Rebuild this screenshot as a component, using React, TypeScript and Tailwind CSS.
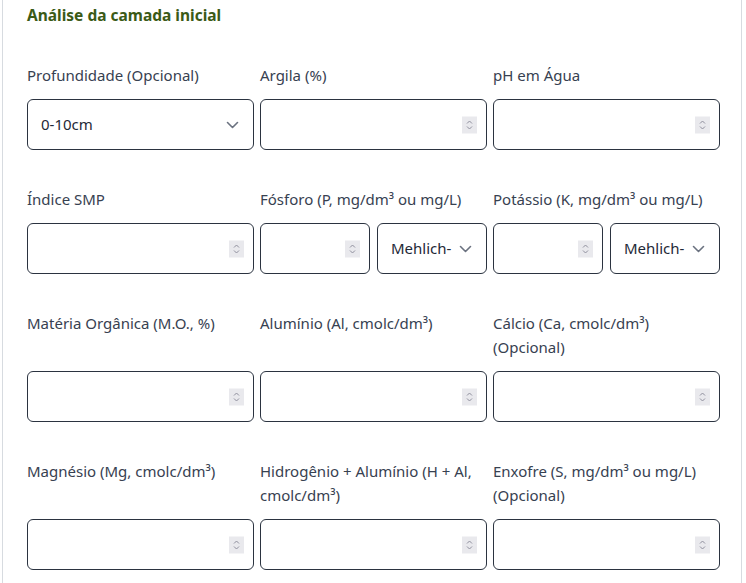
type Field = {
  label: string;
  kind: "number" | "select" | "pair";
  value?: string;
};

const Spinner = () => (
  <span className="absolute right-[9px] top-1/2 -translate-y-1/2 flex h-[17px] w-[15px] items-center justify-center bg-[#e9e9ed]">
    <svg width="7" height="11" viewBox="0 0 7 11" fill="none" stroke="#8f8f9d" strokeWidth="1">
      <path d="M1 4 L3.5 1.5 L6 4" />
      <path d="M1 7 L3.5 9.5 L6 7" />
    </svg>
  </span>
);

const Chevron = () => (
  <svg
    className="absolute right-[14px] top-1/2 -translate-y-1/2"
    width="13"
    height="8"
    viewBox="0 0 13 8"
    fill="none"
    stroke="#6b7280"
    strokeWidth="1.6"
    strokeLinecap="round"
    strokeLinejoin="round"
  >
    <path d="M1.5 1.5 L6.5 6.5 L11.5 1.5" />
  </svg>
);

const NumberInput = () => (
  <div className="relative h-[51px] w-full min-w-0 shrink-0 rounded-md border border-[#2b3340] bg-white">
    <input type="text" className="h-full w-full min-w-0 rounded-md bg-transparent px-3 outline-none" />
    <Spinner />
  </div>
);

const SelectBox = ({ value }: { value: string }) => (
  <div className="relative flex h-[51px] w-full min-w-0 shrink-0 items-center rounded-md border border-[#2b3340] bg-white pl-[13px] text-[15px] text-[#1f2937]">
    <span>{value}</span>
    <Chevron />
  </div>
);

const fields: Field[] = [
  { label: "Profundidade (Opcional)", kind: "select", value: "0-10cm" },
  { label: "Argila (%)", kind: "number" },
  { label: "pH em Água", kind: "number" },
  { label: "Índice SMP", kind: "number" },
  { label: "Fósforo (P, mg/dm³ ou mg/L)", kind: "pair" },
  { label: "Potássio (K, mg/dm³ ou mg/L)", kind: "pair" },
  { label: "Matéria Orgânica (M.O., %)", kind: "number" },
  { label: "Alumínio (Al, cmolc/dm³)", kind: "number" },
  { label: "Cálcio (Ca, cmolc/dm³) (Opcional)", kind: "number" },
  { label: "Magnésio (Mg, cmolc/dm³)", kind: "number" },
  { label: "Hidrogênio + Alumínio (H + Al, cmolc/dm³)", kind: "number" },
  { label: "Enxofre (S, mg/dm³ ou mg/L) (Opcional)", kind: "number" },
];

export default function App() {
  return (
    <div
      className="min-h-[583px] w-[746px] bg-white"
      style={{ fontFamily: "'Noto Sans', sans-serif" }}
    >
      <div className="ml-[2px] min-h-[583px] w-[740px] border-x border-[#d7dbe0] pl-6 pr-[21px] pt-[3px]">
        {/* Título da seção */}
        <h2 className="mb-9 text-[15.5px] font-bold leading-6 text-[#3b5a17]">Análise da camada inicial</h2>

        <div className="grid grid-cols-3 gap-x-[6px] gap-y-[37px]">
          {fields.map((f, i) => (
            <div key={i} className="flex min-w-0 flex-col">
              <label className="mb-3 flex-1 text-[15px] leading-6 text-[#374151]">{f.label}</label>
              {f.kind === "select" && <SelectBox value={f.value ?? ""} />}
              {f.kind === "number" && <NumberInput />}
              {f.kind === "pair" && (
                <div className="grid grid-cols-2 gap-[7px]">
                  <NumberInput />
                  <SelectBox value="Mehlich-" />
                </div>
              )}
            </div>
          ))}
        </div>
      </div>
    </div>
  );
}
